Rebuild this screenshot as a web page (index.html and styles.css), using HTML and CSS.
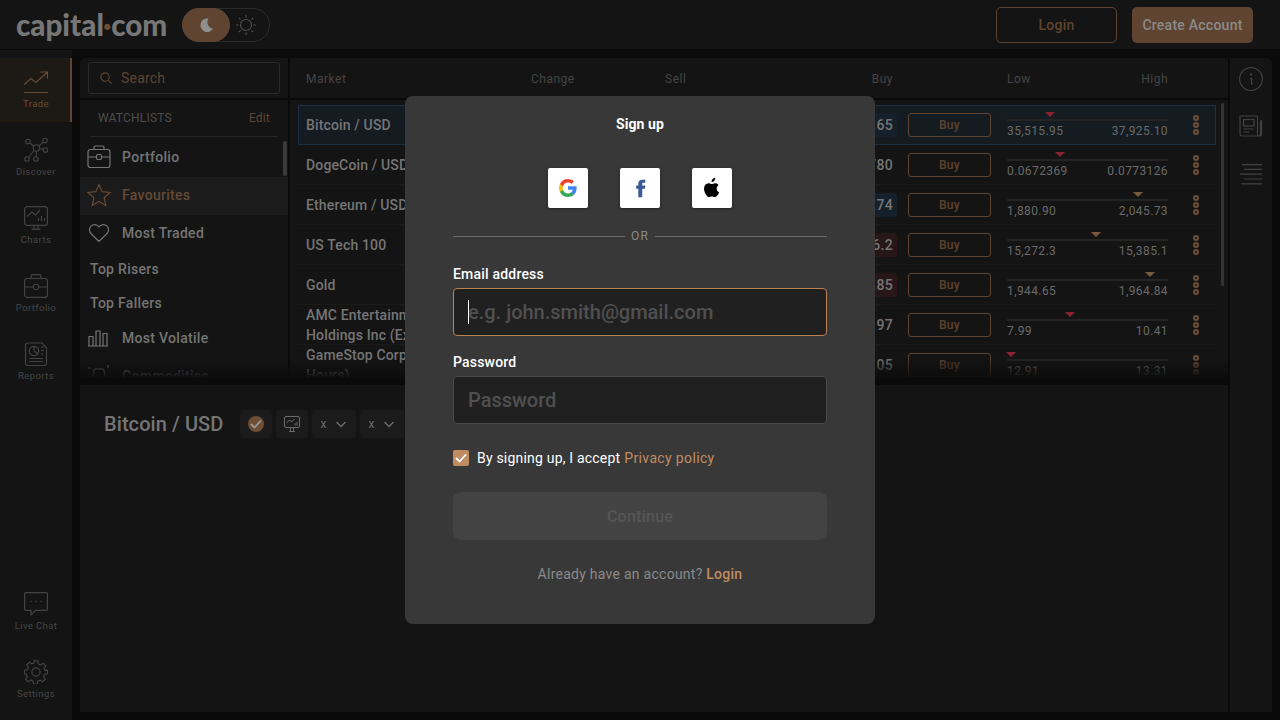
FILE: index.html
```html
<!DOCTYPE html>
<html lang="en">
<head>
<meta charset="utf-8">
<title>Capital.com - Sign up</title>
<link rel="stylesheet" href="styles.css">
</head>
<body>
<div class="app">
  <header class="topbar">
    <div class="logo">capital<span class="logo-dot">·</span>com</div>
    <div class="theme">
      <span class="theme-knob">
        <svg width="18" height="18" viewBox="0 0 18 18"><path fill="currentColor" d="M11.500 2.500a6.800 6.800 0 1 0 4.600 10.200A6.600 6.600 0 0 1 11.500 2.500z"/></svg>
      </span>
      <span class="theme-sun">
        <svg width="22" height="22" viewBox="0 0 22 22" fill="none" stroke="currentColor" stroke-width="1.200"><circle cx="11" cy="11" r="5.500"/><path d="M11 1v2.500M11 18.500V21M1 11h2.500M18.500 11H21M3.900 3.900l1.700 1.700M16.400 16.400l1.700 1.700M3.900 18.100l1.700-1.700M16.400 5.600l1.700-1.700"/></svg>
      </span>
    </div>
    <div class="top-actions">
      <a class="btn-outline">Login</a>
      <a class="btn-fill">Create Account</a>
    </div>
  </header>

  <div class="body">
    <nav class="side">
      <a class="side-item active">
        <svg viewBox="0 0 24 24" fill="none" stroke="currentColor" stroke-width="1.200"><path d="M0 14.500l7-6 5 4L23 2.500M16.500 2h7v6.500M0 22.500h24"/></svg>
        <span>Trade</span>
      </a>
      <a class="side-item">
        <svg viewBox="0 0 24 24" fill="none" stroke="currentColor" stroke-width="1.100"><circle cx="12.500" cy="10" r="3.200"/><circle cx="4" cy="3.500" r="2.300"/><circle cx="21" cy="2.500" r="2.300"/><circle cx="21.500" cy="12" r="2.300"/><circle cx="3" cy="21" r="2.300"/><circle cx="12" cy="21" r="2.300"/><path d="M5.800 5l4.200 3.300M15 7.800l4.300-3.700M15.700 10.500l3.500.9M10 12.500l-5.400 7M12.300 13.200v5.500"/></svg>
        <span>Discover</span>
      </a>
      <a class="side-item">
        <svg viewBox="0 0 24 24" fill="none" stroke="currentColor" stroke-width="1.200"><rect x=".6" y=".6" width="22.800" height="18.800" rx="2.500"/><path d="M3 10.500l5-4.500 3.500 3L16 4M7.500 23.400h9M10 19.500v4M14 19.500v4M14.500 15v-3M17.500 15v-5M20.500 15v-3"/></svg>
        <span>Charts</span>
      </a>
      <a class="side-item">
        <svg viewBox="0 0 24 24" fill="none" stroke="currentColor" stroke-width="1.200"><rect x=".6" y="4.500" width="22.800" height="18.900" rx="2.500"/><path d="M7 4.500V2.100A1.500 1.500 0 0 1 8.500.6h7A1.500 1.500 0 0 1 17 2.100v2.400M.6 13h9M14.500 13h9"/><rect x="9.500" y="10.500" width="5" height="5" rx="1.500"/></svg>
        <span>Portfolio</span>
      </a>
      <a class="side-item">
        <svg viewBox="0 0 24 24" fill="none" stroke="currentColor" stroke-width="1.200"><path d="M3.500 1H18l4.500 4.500v15.900a2.100 2.100 0 0 1-2.100 2.100H3.600a2.100 2.100 0 0 1-2.100-2.100V3A2 2 0 0 1 3.500 1z"/><circle cx="10" cy="9" r="4.700"/><path d="M10 4.300V9l3.300 2.500M17 5h3M17 8.500h3M17 12h2M5 16.500h14M5 19.500h14"/></svg>
        <span>Reports</span>
      </a>
      <div class="side-spacer"></div>
      <a class="side-item">
        <svg viewBox="0 0 24 24" fill="none" stroke="currentColor" stroke-width="1.200"><path d="M1.900.6h20.200a1.300 1.300 0 0 1 1.300 1.300v15.200a1.300 1.300 0 0 1-1.300 1.300H11.500l-4.500 4.500v-4.500H1.900A1.300 1.300 0 0 1 .6 17.100V1.900A1.300 1.300 0 0 1 1.900.6z"/><path d="M6.500 9.500h1.200M11.500 9.500h1.200M16.500 9.500h1.200" stroke-width="1.600"/></svg>
        <span>Live Chat</span>
      </a>
      <a class="side-item">
        <svg viewBox="0 0 26 26" fill="none" stroke="currentColor" stroke-width="1.300"><circle cx="13" cy="13" r="4.500"/><path d="M11 1h4l.7 3.300 2.300 1 2.900-1.800 2.700 2.800-1.800 2.800 1 2.400L25.500 11v4l-3.300.7-1 2.300 1.800 2.900-2.800 2.700-2.800-1.800-2.400 1-.7 3.200h-4l-.7-3.300-2.300-1-2.900 1.800-2.700-2.800 1.800-2.800-1-2.400L.5 15v-4l3.300-.7 1-2.300L3 5.100l2.800-2.700 2.800 1.800 2.400-1z"/></svg>
        <span>Settings</span>
      </a>
    </nav>

    <main class="workspace">
      <section class="markets">
        <aside class="lists">
          <div class="search-wrap">
            <div class="search">
              <svg width="12" height="12" viewBox="0 0 13 13" fill="none" stroke="currentColor" stroke-width="1.200"><circle cx="5.500" cy="5.500" r="4.500"/><path d="M9 9l3.500 3.500"/></svg>
              <span>Search</span>
            </div>
          </div>
          <div class="lists-head"><span class="lists-title">WATCHLISTS</span><a class="lists-edit">Edit</a></div>
          <ul class="list">
            <li class="list-item">
              <svg width="24" height="24" viewBox="0 0 24 24" fill="none" stroke="currentColor" stroke-width="1.200"><rect x="1" y="4.500" width="22" height="18" rx="2.500"/><path d="M7 4.500V2.300A1.300 1.300 0 0 1 8.300 1h7.400A1.300 1.300 0 0 1 17 2.300v2.200M1 12h8.500M14.500 12H23"/><rect x="9.500" y="9.500" width="5" height="5" rx="1.500"/></svg>
              <span>Portfolio</span>
            </li>
            <li class="list-item current">
              <svg width="24" height="24" viewBox="0 0 24 24" fill="none" stroke="currentColor" stroke-width="1.200"><path d="M12 1.500l3.200 7.200 7.800.8-5.900 5.200 1.700 7.800-6.800-4-6.800 4 1.700-7.800L1 9.500l7.800-.8z"/></svg>
              <span>Favourites</span>
            </li>
            <li class="list-item">
              <svg width="24" height="24" viewBox="0 0 24 24" fill="none" stroke="currentColor" stroke-width="1.200"><path d="M12 20.500L4 12.500a5.200 5.200 0 0 1 0-7.400 5.200 5.200 0 0 1 7.300 0l.7.800.7-.8a5.200 5.200 0 0 1 7.300 0 5.200 5.200 0 0 1 0 7.400z"/></svg>
              <span>Most Traded</span>
            </li>
            <li class="list-plain">Top Risers</li>
            <li class="list-plain short">Top Fallers</li>
            <li class="list-item">
              <svg width="24" height="24" viewBox="0 0 24 24" fill="none" stroke="currentColor" stroke-width="1.200"><path d="M2 19.500v-9h4v9M9 19.500V5h4v14.500M16 19.500V7.500h4v12M1 20h20"/></svg>
              <span>Most Volatile</span>
            </li>
            <li class="list-item">
              <svg width="24" height="24" viewBox="0 0 24 24" fill="none" stroke="currentColor" stroke-width="1.200"><path d="M7 6.500a1.500 1.500 0 0 1 1.500-1.500h7A1.500 1.500 0 0 1 17 6.500L19 20H5zM1.500 4h2M21 1v3"/></svg>
              <span>Commodities</span>
            </li>
          </ul>
          <div class="list-scroll"></div>
        </aside>

        <div class="table">
          <div class="table-head">
            <span>Market</span><span>Change</span><span>Sell</span><span class="right">Buy</span><span></span>
            <span class="range-head"><span>Low</span><span>High</span></span>
          </div>

          <div class="row selected">
            <div class="name">Bitcoin / USD</div>
            <div class="price blue">.65</div>
            <a class="buy">Buy</a>
            <div class="range"><i class="mark down" style="left:26.800%"></i><b class="bar"></b><span class="limits"><span>35,515.95</span><span>37,925.10</span></span></div>
            <div class="more"><i></i><i></i><i></i></div>
          </div>
          <div class="row">
            <div class="name">DogeCoin / USD</div>
            <div class="price">780</div>
            <a class="buy">Buy</a>
            <div class="range"><i class="mark down" style="left:33%"></i><b class="bar"></b><span class="limits"><span>0.0672369</span><span>0.0773126</span></span></div>
            <div class="more"><i></i><i></i><i></i></div>
          </div>
          <div class="row">
            <div class="name">Ethereum / USD</div>
            <div class="price blue">.74</div>
            <a class="buy">Buy</a>
            <div class="range"><i class="mark up" style="left:81.400%"></i><b class="bar"></b><span class="limits"><span>1,880.90</span><span>2,045.73</span></span></div>
            <div class="more"><i></i><i></i><i></i></div>
          </div>
          <div class="row">
            <div class="name">US Tech 100</div>
            <div class="price red">6.2</div>
            <a class="buy">Buy</a>
            <div class="range"><i class="mark up" style="left:55.300%"></i><b class="bar"></b><span class="limits"><span>15,272.3</span><span>15,385.1</span></span></div>
            <div class="more"><i></i><i></i><i></i></div>
          </div>
          <div class="row">
            <div class="name">Gold</div>
            <div class="price red">.85</div>
            <a class="buy">Buy</a>
            <div class="range"><i class="mark up" style="left:88.800%"></i><b class="bar"></b><span class="limits"><span>1,944.65</span><span>1,964.84</span></span></div>
            <div class="more"><i></i><i></i><i></i></div>
          </div>
          <div class="row">
            <div class="name two">AMC Entertainment<br>Holdings Inc (Extended Hours)</div>
            <div class="price">.97</div>
            <a class="buy">Buy</a>
            <div class="range"><i class="mark down" style="left:39.100%"></i><b class="bar"></b><span class="limits"><span>7.99</span><span>10.41</span></span></div>
            <div class="more"><i></i><i></i><i></i></div>
          </div>
          <div class="row">
            <div class="name two">GameStop Corp (Extended<br>Hours)</div>
            <div class="price">.05</div>
            <a class="buy">Buy</a>
            <div class="range"><i class="mark down" style="left:2.500%"></i><b class="bar"></b><span class="limits"><span>12.91</span><span>13.31</span></span></div>
            <div class="more"><i></i><i></i><i></i></div>
          </div>
          <div class="table-scroll"></div>
        </div>
        <div class="fade"></div>
      </section>

      <aside class="rail">
        <svg width="24" height="24" viewBox="0 0 24 24" fill="none" stroke="currentColor" stroke-width="1.200"><circle cx="12" cy="12" r="11.400"/><path d="M11 11.500h1.500v4.500c0 1 .7 1.200 1.500.8"/><circle cx="12" cy="7.500" r=".6"/></svg>
        <svg width="24" height="22" viewBox="0 0 24 22" fill="none" stroke="currentColor" stroke-width="1.200"><path d="M19.500 21H2.500A1.500 1.500 0 0 1 1 19.500v-18A.5.5 0 0 1 1.500 1h16a1 1 0 0 1 1 1v17.500a1.500 1.500 0 0 0 3 0V5.500M22.500 5v14.500a1.500 1.500 0 0 1-1.500 1.500"/><rect x="4.500" y="4.500" width="10.500" height="6.500"/><path d="M4.500 14h10M4.500 17h6"/></svg>
        <svg width="22" height="21" viewBox="0 0 22 21" fill="none" stroke="currentColor" stroke-width="1.200"><path d="M2 .6h20M4 5.400h18M0 10.200h22M4 15h18M1 19.800h21"/></svg>
      </aside>

      <section class="detail">
        <h2 class="detail-title">Bitcoin / USD</h2>
        <div class="tools">
          <span class="tool"><span class="tool-check"><svg width="12" height="10" viewBox="0 0 12 10" fill="none" stroke="currentColor" stroke-width="1.800"><path d="M1 5l3.500 3.500L11 1.500"/></svg></span></span>
          <span class="tool"><svg width="16" height="16" viewBox="0 0 16 16" fill="none" stroke="currentColor" stroke-width="1"><rect x=".5" y=".5" width="15" height="11" rx="1.500"/><path d="M2.500 7l3-3 2 2 3-3M5 15.500h6M6.500 11.500v4M9.500 11.500v4M11 9.500V7M13 9.500V6"/></svg></span>
          <span class="tool wide"><span>x</span><svg width="12" height="7" viewBox="0 0 12 7" fill="none" stroke="currentColor" stroke-width="1.500"><path d="M1.500 1l4.500 4.500L10.500 1"/></svg></span>
          <span class="tool wide"><span>x</span><svg width="12" height="7" viewBox="0 0 12 7" fill="none" stroke="currentColor" stroke-width="1.500"><path d="M1.500 1l4.500 4.500L10.500 1"/></svg></span>
        </div>
      </section>
    </main>
  </div>
</div>

<div class="scrim">
  <form class="modal">
    <h1 class="modal-title">Sign up</h1>
    <div class="socials">
      <a class="social">
        <svg width="18" height="18" viewBox="0 0 18 18"><path fill="#4285F4" d="M17.640 9.200c0-.64-.06-1.250-.16-1.840H9v3.480h4.840a4.140 4.140 0 0 1-1.800 2.720v2.260h2.920c1.700-1.570 2.680-3.880 2.680-6.620z"/><path fill="#34A853" d="M9 18c2.430 0 4.470-.8 5.960-2.180l-2.920-2.260c-.8.540-1.840.86-3.040.86-2.340 0-4.320-1.580-5.030-3.700H.96v2.330A9 9 0 0 0 9 18z"/><path fill="#FBBC05" d="M3.970 10.720A5.400 5.400 0 0 1 3.680 9c0-.6.1-1.180.29-1.720V4.950H.96A9 9 0 0 0 0 9c0 1.450.35 2.830.96 4.050l3.010-2.330z"/><path fill="#EA4335" d="M9 3.580c1.320 0 2.500.45 3.440 1.350l2.580-2.580C13.460.89 11.430 0 9 0A9 9 0 0 0 .96 4.950l3.010 2.330C4.680 5.160 6.660 3.580 9 3.580z"/></svg>
      </a>
      <a class="social">
        <svg width="21" height="21" viewBox="0 0 24 24"><path fill="#3b5998" d="M14 8.500V6.600c0-.9.600-1.100 1-1.100h2.500V2H14c-3.300 0-4.500 2.400-4.500 4.400v2.100H7v3.700h2.500V22H14v-9.800h3l.5-3.700H14z"/></svg>
      </a>
      <a class="social">
        <svg width="22" height="22" viewBox="0 0 24 24"><path fill="#000" d="M17.050 12.540c-.03-2.550 2.080-3.770 2.170-3.830-1.180-1.730-3.020-1.970-3.680-2-1.570-.16-3.060.92-3.850.92-.79 0-2.020-.9-3.320-.87-1.710.03-3.290.99-4.170 2.520-1.780 3.080-.45 7.650 1.280 10.150.85 1.220 1.860 2.600 3.180 2.550 1.280-.05 1.760-.83 3.310-.83 1.540 0 1.980.83 3.330.8 1.380-.02 2.250-1.240 3.090-2.470.97-1.420 1.370-2.800 1.400-2.870-.03-.01-2.690-1.030-2.740-4.070zM14.500 4.060c.7-.85 1.180-2.040 1.050-3.220-1.010.04-2.240.67-2.970 1.520-.65.75-1.220 1.960-1.070 3.120 1.130.09 2.280-.57 2.990-1.420z"/></svg>
      </a>
    </div>
    <div class="or"><span>OR</span></div>
    <label class="field-label" for="email">Email address</label>
    <div class="field focus">
      <input id="email" class="field-input" type="text" placeholder="e.g. john.smith@gmail.com">
      <span class="caret"></span>
    </div>
    <label class="field-label second" for="password">Password</label>
    <div class="field">
      <input id="password" class="field-input" type="text" placeholder="Password">
    </div>
    <div class="accept">
      <span class="check"><svg width="12" height="10" viewBox="0 0 12 10" fill="none" stroke="#fff" stroke-width="1.800"><path d="M1 5l3.500 3.500L11 1.500"/></svg></span>
      <span>By signing up, I accept</span>
      <a class="link">Privacy policy</a>
    </div>
    <div class="continue">Continue</div>
    <p class="already">Already have an account? <a class="link strong">Login</a></p>
  </form>
</div>
</body>
</html>
```
FILE: styles.css
```css
* { box-sizing: border-box; }
html, body { margin: 0; padding: 0; height: 720px; overflow: hidden; }
body { background: #0a0a0a; font-family: Roboto, "Liberation Sans", sans-serif; color: #757575; letter-spacing: .3px; }
a { display: inline-block; }
h1, h2, p, ul { margin: 0; padding: 0; }
ul { list-style: none; }

.app { width: 1280px; height: 720px; display: flex; flex-direction: column; }

.topbar { height: 49px; flex: none; background: #141414; display: flex; align-items: center; padding: 0 27px 0 16px; margin-bottom: 1px; }
.logo { font-family: Lato, sans-serif; font-weight: 900; font-size: 29.600px; line-height: 49px; letter-spacing: 0; color: #777; width: 166px; white-space: nowrap; }
.logo-dot { color: #6e4e35; }
.theme { width: 88px; height: 34px; border: 1px solid #2b2b2b; border-radius: 17px; display: flex; align-items: center; color: #4d4d4d; }
.theme-knob { width: 48px; height: 34px; margin: -1px 0 -1px -1px; border-radius: 17px; background: #5f4431; color: #8f8f8f; display: flex; align-items: center; justify-content: center; }
.theme-sun { flex: 1; display: flex; align-items: center; justify-content: center; margin-left: -7px; }
.top-actions { margin-left: auto; display: flex; gap: 15px; }
.btn-outline, .btn-fill { width: 121px; height: 36px; border-radius: 5px; font-size: 14px; font-weight: 500; line-height: 36px; text-align: center; letter-spacing: .25px; }
.btn-outline { border: 1px solid #5f4431; color: #5f4431; line-height: 34px; }
.btn-fill { background: #5f4431; color: #8a8a8a; }

.body { flex: 1; display: flex; min-height: 0; }

.side { width: 72px; flex: none; background: #141414; display: flex; flex-direction: column; gap: 4px; padding: 8px 0; color: #434343; }
.side-item { height: 64px; flex: none; display: flex; flex-direction: column; align-items: center; justify-content: flex-end; padding-bottom: 12px; gap: 4px; }
.side-item svg { width: 24px; height: 24px; }
.side-item span { font-size: 9.500px; line-height: 12px; letter-spacing: .4px; color: #464646; }
.side-item.active { background: #1d1915; border-right: 2px solid #5f4431; color: #6b4c34; }
.side-item.active svg { margin-left: 2px; }
.side-item.active span { color: #6b4c34; margin-left: 2px; }
.side-spacer { flex: 1; }

.workspace { flex: 1; display: grid; grid-template-columns: 1148px 2px 42px; grid-template-rows: 320px 7px 327px; margin: 8px; }
.markets { grid-column: 1; grid-row: 1; position: relative; background: #141414; border-radius: 6px 0 0 0; display: flex; overflow: hidden; }
.detail { grid-column: 1; grid-row: 3; background: #141414; display: flex; align-items: flex-start; padding: 25px 24px; gap: 17px; }
.rail { grid-column: 3; grid-row: 1 / 4; background: #141414; border-radius: 0 6px 0 0; display: flex; flex-direction: column; align-items: center; color: #414141; padding-top: 9px; gap: 24px; }
.rail svg:last-child { margin-top: 3px; }

.lists { width: 208px; flex: none; position: relative; }
.search-wrap { height: 42px; border-bottom: 2px solid #0a0a0a; padding: 4px 8px 0; }
.search { height: 32px; border: 1px solid #2a2a2a; border-radius: 3px; display: flex; align-items: center; gap: 9px; padding-left: 11px; color: #5f4431; font-size: 14px; letter-spacing: .2px; }
.lists-head { height: 37px; margin: 0 10px; padding: 0 8px; border-bottom: 1px solid #262626; display: flex; align-items: center; justify-content: space-between; font-size: 12px; letter-spacing: .2px; }
.lists-title { color: #4d4d4d; }
.lists-edit { color: #5f4431; }
.list { padding-top: 1px; }
.list-item { height: 38px; display: flex; align-items: center; padding-left: 7px; gap: 11px; font-size: 14px; font-weight: 500; color: #757575; }
.list-item.current { background: linear-gradient(transparent 1px, #1b1b1b 1px); box-shadow: 0 1px 0 #1b1b1b; color: #664a35; }
.list-plain { height: 34px; padding-left: 10px; line-height: 34px; font-size: 14px; font-weight: 500; color: #757575; }
.list-plain.short { height: 33px; }
.list-scroll { position: absolute; right: 1px; top: 83px; width: 4px; height: 35px; background: #3a3a3a; border-radius: 2px; }

.table { width: 940px; flex: none; position: relative; border-left: 2px solid #0a0a0a; padding-left: 8px; }
.table-head, .row { display: grid; grid-template-columns: 225px 134px 106px 126px 94px 177px 48px; width: 918px; padding-left: 8px; }
.table-head { height: 42px; margin-left: -8px; width: 938px; padding: 1px 0 0 16px; border-bottom: 2px solid #0a0a0a; align-items: center; font-size: 12px; letter-spacing: .5px; color: #454545; margin-bottom: 5px; }
.right { text-align: right; padding-right: 4px; }
.range-head { display: flex; justify-content: space-between; padding-left: 16px; }
.row { height: 40px; align-items: center; border-bottom: 1px solid #1a1a1a; font-size: 14px; position: relative; }
.row.selected { background: #141b21; box-shadow: inset 0 0 0 1px #1c3044; border-bottom: 0; }
.name { font-weight: 500; color: #757575; white-space: nowrap; letter-spacing: .15px; grid-column: 1; }
.name.two { line-height: 20px; align-self: start; }
.price { grid-column: 4; height: 24px; line-height: 24px; border-radius: 3px; text-align: right; padding-right: 4px; font-weight: 500; color: #757575; width: 70px; justify-self: end; }
.price.blue { background: #15202b; }
.price.red { background: #281719; }
.buy { grid-column: 5; justify-self: end; width: 83px; height: 24px; line-height: 22px; border: 1px solid #5f4431; border-radius: 3px; text-align: center; font-size: 12px; font-weight: 500; color: #5f4431; }
.range { grid-column: 6; position: relative; margin-left: 16px; height: 40px; padding-top: 14px; }
.bar { display: block; height: 2px; background: #242424; }
.limits { display: flex; justify-content: space-between; font-size: 12px; line-height: 16px; margin-top: 2px; color: #6a6a6a; letter-spacing: .4px; }
.mark { position: absolute; top: 7px; width: 0; height: 0; margin-left: -5px; border-left: 5px solid transparent; border-right: 5px solid transparent; border-top: 5px solid #7a5a3e; }
.mark.down { border-top-color: #8c2230; }
.more { grid-column: 7; display: flex; flex-direction: column; align-items: center; gap: 1px; padding-left: 8px; }
.more i { width: 6px; height: 6px; border: 2px solid #6e4e35; border-radius: 50%; }
.table-scroll { position: absolute; left: 931px; top: 45px; width: 3px; height: 183px; background: #333; border-radius: 2px; }
.fade { position: absolute; left: 0; right: 0; bottom: 0; height: 20px; background: linear-gradient(to bottom, rgba(10,10,10,0), #0c0c0c); }

.detail-title { font-size: 20px; font-weight: 500; color: #757575; line-height: 28px; letter-spacing: .08px; white-space: nowrap; }
.tools { display: flex; gap: 4px; }
.tool { width: 32px; height: 28px; border-radius: 4px; background: #1b1b1b; color: #6b6b6b; display: flex; align-items: center; justify-content: center; }
.tool.wide { width: 44px; gap: 8px; font-size: 12px; justify-content: flex-start; padding-left: 8px; }
.tool-check { width: 16px; height: 16px; border-radius: 50%; background: #6e4e35; color: #9a9a9a; display: flex; align-items: center; justify-content: center; }

.scrim { position: fixed; inset: 0; display: flex; align-items: center; justify-content: center; }
.modal { width: 470px; height: 528px; background: #383838; border-radius: 8px; padding: 0 48px; display: flex; flex-direction: column; color: #fff; }
.modal-title { font-size: 14px; font-weight: 700; line-height: 20px; text-align: center; margin-top: 18px; letter-spacing: .1px; }
.socials { display: flex; justify-content: center; gap: 32px; margin-top: 34px; }
.social { width: 40px; height: 40px; background: #fff; border-radius: 2px; box-shadow: 0 1px 3px rgba(0,0,0,.4); display: flex; align-items: center; justify-content: center; }
.or { display: flex; align-items: center; gap: 6px; margin-top: 20px; height: 16px; font-size: 12px; color: #8a8a8a; letter-spacing: 1.200px; }
.or::before, .or::after { content: ""; flex: 1; height: 1px; background: #6c6c6c; }
.field-label { font-size: 14px; font-weight: 500; line-height: 20px; margin-top: 20px; margin-bottom: 4px; letter-spacing: .2px; }
.field-label.second { margin-top: 16px; }
.field { position: relative; height: 48px; background: #202020; border: 1px solid #4a4a4a; border-radius: 4px; }
.field.focus { border-color: #b98254; }
.field-input { display: block; width: 100%; height: 100%; background: transparent; border: 0; outline: 0; padding: 0 14px; font-family: inherit; font-size: 20px; font-weight: 500; letter-spacing: 0; color: #fff; }
.field-input::placeholder { color: #505050; opacity: 1; }
.caret { position: absolute; left: 14px; top: 11px; width: 1px; height: 24px; background: #fff; }
.accept { display: flex; align-items: center; margin-top: 26px; height: 16px; font-size: 14px; letter-spacing: .2px; }
.check { width: 16px; height: 16px; background: #c08c62; border-radius: 2px; display: flex; align-items: center; justify-content: center; margin-right: 8px; }
.link { color: #c08c62; margin-left: 4px; letter-spacing: .35px; }
.link.strong { font-weight: 500; margin-left: 0; letter-spacing: .25px; }
.continue { height: 48px; margin-top: 26px; background: #434343; border-radius: 8px; text-align: center; line-height: 50px; font-size: 16px; font-weight: 500; color: #565656; letter-spacing: .25px; }
.already { margin-top: 24px; text-align: center; font-size: 14px; line-height: 20px; color: #8a8a8a; letter-spacing: .26px; }
```
